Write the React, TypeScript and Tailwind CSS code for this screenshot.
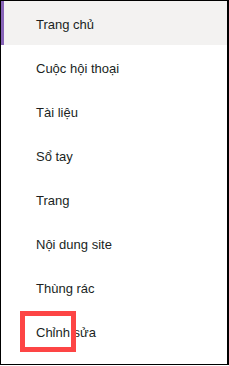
const items = [
  'Trang chủ',
  'Cuộc hội thoại',
  'Tài liệu',
  'Sổ tay',
  'Trang',
  'Nội dung site',
  'Thùng rác',
  'Chỉnh sửa',
];

export default function App() {
  return (
    <div className="w-[229px] h-[366px] bg-white font-['Liberation_Sans',Arial,sans-serif]">
      <div className="relative h-[365px] border border-black border-r-2 bg-white">
        <nav className="flex flex-col">
          {items.map((label, i) => (
            <div
              key={label}
              className={
                i === 0
                  ? 'h-[44px] flex items-center pt-[4px] pl-[32px] text-[13px] text-[#201f1e] bg-[#f3f2f1] border-l-[3px] border-[#8764b8]'
                  : 'h-[44px] flex items-center pt-[4px] pl-[35px] text-[13px] text-[#201f1e]'
              }
            >
              {label}
            </div>
          ))}
        </nav>

        {/* highlight box */}
        <div className="absolute left-[19px] top-[310px] w-[56px] h-[41px] border-[5px] border-[#fd4545]" />
      </div>
    </div>
  );
}
